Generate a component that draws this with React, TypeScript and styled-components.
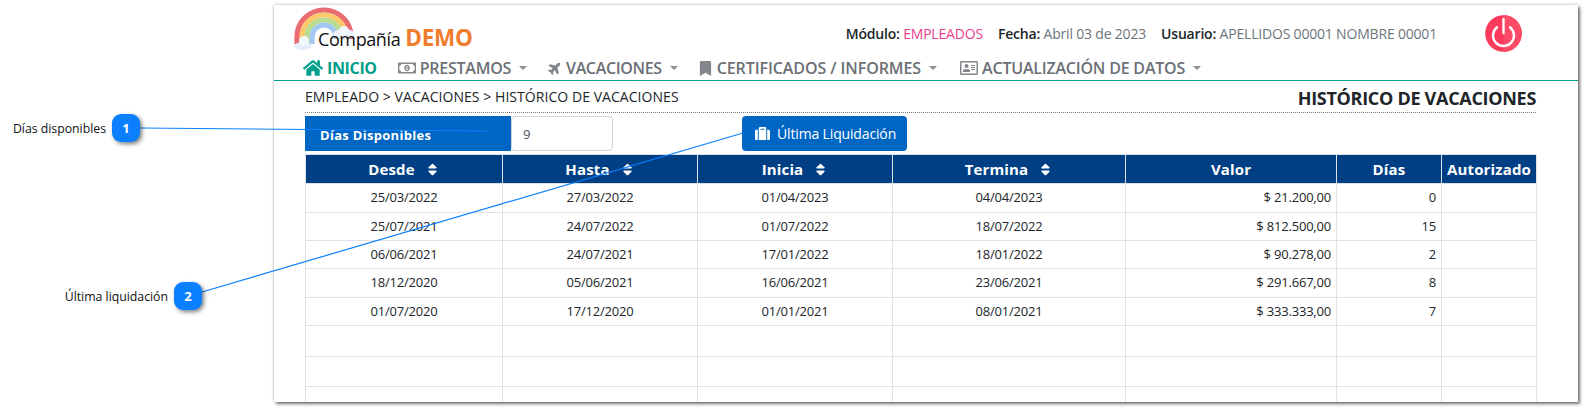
import React from "react";
import styled, { createGlobalStyle } from "styled-components";
import {
  FaHome,
  FaRegMoneyBillAlt,
  FaPlane,
  FaBookmark,
  FaRegAddressCard,
  FaSuitcase,
  FaSort,
} from "react-icons/fa";

const FONT = `"Open Sans", "Noto Sans", "Liberation Sans", sans-serif`;

const GlobalStyle = createGlobalStyle`
  html, body {
    margin: 0;
    padding: 0;
    background: #fff;
    overflow: hidden;
  }
  body {
    font-family: ${FONT};
    color: #212529;
  }
`;

interface ColumnDef {
  label: string;
  width: number;
  sortable?: boolean;
}

const COLUMNS: ColumnDef[] = [
  { label: "Desde", width: 197, sortable: true },
  { label: "Hasta", width: 195, sortable: true },
  { label: "Inicia", width: 195, sortable: true },
  { label: "Termina", width: 233, sortable: true },
  { label: "Valor", width: 211 },
  { label: "Días", width: 105 },
  { label: "Autorizado", width: 95 },
];

const ROWS = [
  { h: 29, cells: ["25/03/2022", "27/03/2022", "01/04/2023", "04/04/2023", "$ 21.200,00", "0", ""] },
  { h: 28, cells: ["25/07/2021", "24/07/2022", "01/07/2022", "18/07/2022", "$ 812.500,00", "15", ""] },
  { h: 28, cells: ["06/06/2021", "24/07/2021", "17/01/2022", "18/01/2022", "$ 90.278,00", "2", ""] },
  { h: 29, cells: ["18/12/2020", "05/06/2021", "16/06/2021", "23/06/2021", "$ 291.667,00", "8", ""] },
  { h: 28, cells: ["01/07/2020", "17/12/2020", "01/01/2021", "08/01/2021", "$ 333.333,00", "7", ""] },
  { h: 31, cells: ["", "", "", "", "", "", ""] },
  { h: 30, cells: ["", "", "", "", "", "", ""] },
  { h: 30, cells: ["", "", "", "", "", "", ""] },
];

const Page = styled.div`
  position: relative;
  width: 1587px;
  height: 411px;
  overflow: hidden;
`;

const Panel = styled.div`
  width: 1304px;
  height: 397px;
  margin: 5px 0 0 274px;
  padding: 0 42px 0 31px;
  box-sizing: border-box;
  background: #fff;
  overflow: hidden;
  box-shadow: 0 -1px 3px rgba(0, 0, 0, 0.12), -1px 0 2px rgba(0, 0, 0, 0.1),
    2px 2px 3px rgba(0, 0, 0, 0.55);
`;

const TopBar = styled.div`
  display: flex;
  justify-content: space-between;
  height: 51px;
`;

const Brand = styled.div`
  position: relative;
  display: flex;
  align-items: baseline;
  gap: 5px;
  padding: 18px 0 0 13px;
  height: 33px;
`;

const BrandName = styled.span`
  position: relative;
  font-size: 18px;
  line-height: 30px;
  color: #111;
  letter-spacing: -0.4px;
`;

const BrandDemo = styled.span`
  font-size: 22.5px;
  line-height: 30px;
  font-weight: 700;
  color: #f07c2e;
  letter-spacing: -0.2px;
`;

const LogoMark = styled.svg`
  position: absolute;
  left: -13px;
  top: 0;
`;

const SessionInfo = styled.div`
  display: flex;
  align-items: center;
  height: 56px;
  font-size: 14px;
  letter-spacing: -0.19px;
`;

const InfoItem = styled.span`
  margin-right: 15px;
  font-weight: 600;
  color: #212529;
`;

const InfoValue = styled.span<{ $accent?: boolean }>`
  font-weight: 400;
  color: ${(p) => (p.$accent ? "#e83e8c" : "#6c757d")};
`;

const PowerButton = styled.svg`
  margin: 0 14px 0 33px;
  flex: none;
`;

const NavBar = styled.div`
  display: flex;
  align-items: center;
  height: 24px;
  margin: 0 -42px 0 -31px;
  padding-left: 29px;
  border-bottom: 1px solid #00a08c;
  color: #6b6f76;
`;

const NavItem = styled.span<{ $active?: boolean; $gap: number; $tracking: number }>`
  display: flex;
  align-items: center;
  gap: 4px;
  margin-right: ${(p) => p.$gap}px;
  font-size: 16px;
  font-weight: ${(p) => (p.$active ? 700 : 600)};
  letter-spacing: ${(p) => p.$tracking}px;
  white-space: nowrap;
  color: ${(p) => (p.$active ? "#00a08c" : "#6b6f76")};

  svg {
    flex: none;
    color: ${(p) => (p.$active ? "#00a08c" : "#83878c")};
  }
`;

const TiltedPlane = styled(FaPlane)`
  transform: rotate(-45deg);
`;

const Caret = styled.i`
  display: inline-block;
  margin-left: 4px;
  border-top: 4px solid #8d9196;
  border-left: 4px solid transparent;
  border-right: 4px solid transparent;
`;

const TitleRow = styled.div`
  display: flex;
  justify-content: space-between;
  align-items: center;
  height: 31px;
  border-bottom: 1px dotted #777;
`;

const Breadcrumb = styled.span`
  font-size: 14px;
  letter-spacing: 0.05px;
  color: #212529;
`;

const PageTitle = styled.span`
  font-size: 18px;
  font-weight: 700;
  letter-spacing: -0.3px;
  color: #212529;
  padding-top: 3px;
`;

const FormRow = styled.div`
  display: flex;
  margin-top: 3px;
  height: 35px;
`;

const FieldLabel = styled.div`
  display: flex;
  align-items: center;
  width: 206px;
  padding: 3px 0 0 15px;
  box-sizing: border-box;
  background: #0066c3;
  color: #fff;
  font-size: 13px;
  font-weight: 700;
  letter-spacing: 0.3px;
`;

const FieldValue = styled.div`
  display: flex;
  align-items: center;
  width: 102px;
  padding-left: 11px;
  box-sizing: border-box;
  background: #fff;
  border: 1px solid #ced4da;
  border-radius: 4px;
  font-size: 13px;
  color: #495057;
`;

const ActionButton = styled.div`
  display: flex;
  align-items: center;
  gap: 7px;
  width: 165px;
  margin-left: 129px;
  padding-left: 13px;
  box-sizing: border-box;
  background: #0066c3;
  border-radius: 4px;
  color: #fff;
  font-size: 14px;
  letter-spacing: -0.15px;
`;

const Grid = styled.table`
  table-layout: fixed;
  width: 1231px;
  margin-top: 3px;
  border-collapse: collapse;
  font-size: 13px;
`;

const HeadCell = styled.th`
  height: 27px;
  padding: 0 0 1px;
  background: #003f84;
  color: #fff;
  font-size: 15px;
  font-weight: 700;
  letter-spacing: 0.15px;
  border: 1px solid #dee2e6;
`;

const SortIcon = styled(FaSort)`
  margin-left: 10px;
  vertical-align: -2px;
`;

const Cell = styled.td<{ $right: boolean }>`
  padding: 0 ${(p) => (p.$right ? "5px" : "0")} 2px 0;
  text-align: ${(p) => (p.$right ? "right" : "center")};
  border: 1px solid #dee2e6;
  letter-spacing: -0.2px;
`;

const Annotations = styled.svg`
  position: absolute;
  left: 0;
  top: 0;
  pointer-events: none;
`;

const Callout = styled.div<{ $x: number; $y: number }>`
  position: absolute;
  left: ${(p) => p.$x}px;
  top: ${(p) => p.$y}px;
  display: flex;
  align-items: center;
  justify-content: flex-end;
  gap: 6px;
  width: ${(p) => (p.$x === 12 ? 128 : 135)}px;
`;

const CalloutText = styled.span`
  font-size: 12.3px;
  letter-spacing: -0.02px;
  white-space: nowrap;
  color: #111;
`;

const CalloutBadge = styled.span`
  display: flex;
  align-items: center;
  justify-content: center;
  flex: none;
  width: 28px;
  height: 28px;
  border-radius: 9px;
  background: #0a80ff;
  color: #fff;
  font-size: 13px;
  font-weight: 700;
  box-shadow: 2px 2px 4px rgba(0, 0, 0, 0.5);
`;

function Logo() {
  const arcs = [
    { r: 27, c: "#e96c72" },
    { r: 22, c: "#fbc96b" },
    { r: 17, c: "#b9dd8e" },
    { r: 12, c: "#a5c8f3" },
  ];
  return (
    <LogoMark width="70" height="48" viewBox="0 0 70 48">
      {arcs.map((a) => (
        <path
          key={a.r}
          d={`M${32 - a.r} 39 V32 A${a.r} ${a.r} 0 0 1 ${32 + a.r} 32 V34`}
          fill="none"
          stroke={a.c}
          strokeWidth="5.2"
        />
      ))}
      <ellipse cx="11" cy="41" rx="9" ry="4" fill="#e4eefb" />
      <circle cx="12" cy="36" r="5" fill="#f2f6fd" />
      <ellipse cx="52" cy="29" rx="11" ry="5" fill="#eaf1fb" />
      <circle cx="52" cy="26" r="5" fill="#f2f6fd" />
    </LogoMark>
  );
}

function Power() {
  return (
    <PowerButton width="37" height="37" viewBox="0 0 37 37">
      <circle cx="18.5" cy="18.5" r="18.3" fill="#fb3a5c" />
      <path d="M18.5 0.2 A18.3 18.3 0 0 1 18.5 36.8 Z" fill="#ff4a68" />
      <path d="M12 12.2 A10.5 10.5 0 1 0 25 12.2" fill="none" stroke="#fff" strokeWidth="2.4" strokeLinecap="round" />
      <path d="M18.5 4 V18" fill="none" stroke="#fff" strokeWidth="2.4" strokeLinecap="round" />
    </PowerButton>
  );
}

export default function App() {
  return (
    <Page>
      <GlobalStyle />
      <Panel>
        <TopBar>
          <Brand>
            <Logo />
            <BrandName>Compañía</BrandName>
            <BrandDemo>DEMO</BrandDemo>
          </Brand>
          <SessionInfo>
            <InfoItem>
              Módulo: <InfoValue $accent>EMPLEADOS</InfoValue>
            </InfoItem>
            <InfoItem>
              Fecha: <InfoValue>Abril 03 de 2023</InfoValue>
            </InfoItem>
            <InfoItem>
              Usuario: <InfoValue>APELLIDOS 00001 NOMBRE 00001</InfoValue>
            </InfoItem>
            <Power />
          </SessionInfo>
        </TopBar>
        <NavBar>
          <NavItem $active $gap={21} $tracking={-0.35}>
            <FaHome size={20} />
            INICIO
          </NavItem>
          <NavItem $gap={21} $tracking={-0.25}>
            <FaRegMoneyBillAlt size={18} />
            PRESTAMOS
            <Caret />
          </NavItem>
          <NavItem $gap={20} $tracking={-0.35}>
            <TiltedPlane size={14} />
            VACACIONES
            <Caret />
          </NavItem>
          <NavItem $gap={23} $tracking={-0.08}>
            <FaBookmark size={15} />
            CERTIFICADOS / INFORMES
            <Caret />
          </NavItem>
          <NavItem $gap={0} $tracking={-0.2}>
            <FaRegAddressCard size={18} />
            ACTUALIZACIÓN DE DATOS
            <Caret />
          </NavItem>
        </NavBar>
        <TitleRow>
          <Breadcrumb>EMPLEADO &gt; VACACIONES &gt; HISTÓRICO DE VACACIONES</Breadcrumb>
          <PageTitle>HISTÓRICO DE VACACIONES</PageTitle>
        </TitleRow>
        <FormRow>
          <FieldLabel>Días Disponibles</FieldLabel>
          <FieldValue>9</FieldValue>
          <ActionButton>
            <FaSuitcase size={15} />
            Última Liquidación
          </ActionButton>
        </FormRow>
        <Grid>
          <colgroup>
            {COLUMNS.map((c) => (
              <col key={c.label} style={{ width: c.width }} />
            ))}
          </colgroup>
          <thead>
            <tr>
              {COLUMNS.map((c) => (
                <HeadCell key={c.label}>
                  {c.label}
                  {c.sortable && <SortIcon size={15} />}
                </HeadCell>
              ))}
            </tr>
          </thead>
          <tbody>
            {ROWS.map((row, i) => (
              <tr key={i} style={{ height: row.h }}>
                {row.cells.map((text, j) => (
                  <Cell key={j} $right={j >= 4}>
                    {text}
                  </Cell>
                ))}
              </tr>
            ))}
          </tbody>
        </Grid>
      </Panel>
      <Annotations width="1587" height="411" viewBox="0 0 1587 411">
        <line x1="140" y1="128" x2="487" y2="131" stroke="#0a80ff" strokeWidth="1.2" />
        <line x1="202" y1="292" x2="743" y2="133" stroke="#0a80ff" strokeWidth="1.2" />
      </Annotations>
      <Callout $x={12} $y={114}>
        <CalloutText>Días disponibles</CalloutText>
        <CalloutBadge>1</CalloutBadge>
      </Callout>
      <Callout $x={67} $y={282}>
        <CalloutText>Última liquidación</CalloutText>
        <CalloutBadge>2</CalloutBadge>
      </Callout>
    </Page>
  );
}
